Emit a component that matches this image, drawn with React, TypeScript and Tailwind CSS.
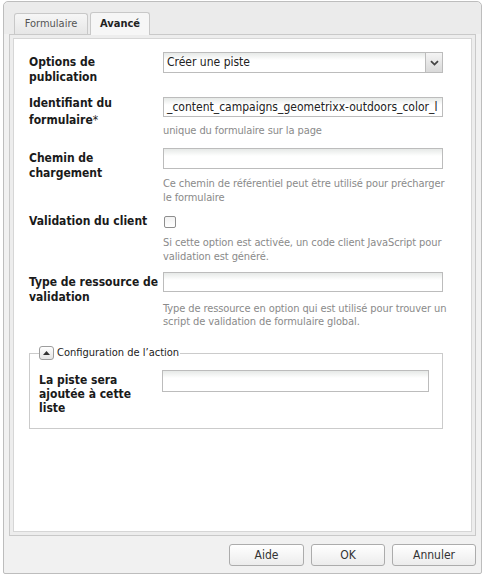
const font = "font-['DejaVu_Sans_Condensed','DejaVu_Sans',sans-serif]";

const inputBase =
  "border border-[#bcbcbc] bg-[linear-gradient(to_bottom,#e6e9e7,#ffffff_7px)] px-[3px] text-[12px] text-[#222] overflow-hidden whitespace-nowrap";

const Hint = ({ children, className = "" }: { children: React.ReactNode; className?: string }) => (
  <div className={`text-[11px] tracking-[-0.1px] text-[#8a8a8a] ${className}`}>{children}</div>
);

const Label = ({ children, className = "" }: { children: React.ReactNode; className?: string }) => (
  <div className={`w-[134px] shrink-0 text-[12px] font-bold text-[#1a1a1a] ${className}`}>{children}</div>
);

const Btn = ({ label, w }: { label: string; w: string }) => (
  <button
    type="button"
    className={`${w} h-[22px] rounded-[3px] border border-[#acacac] bg-[linear-gradient(to_bottom,#ffffff,#ececec)] text-[12px] text-[#333]`}
  >
    {label}
  </button>
);

export default function App() {
  return (
    <div className={`w-[489px] h-[577px] bg-white pt-[1px] pl-[3px] ${font}`}>
      <div className="flex h-[573px] w-[479px] flex-col rounded-t-[5px] rounded-b-[2px] border border-[#bdbdbd] bg-[#f1f1f1]">
        {/* tabs */}
        <div className="rounded-t-[5px] bg-[#ebebeb]">
          <div className="ml-[10px] mt-[10px] flex items-end gap-[2px]">
            <div className="flex h-[21px] w-[74px] items-center justify-center rounded-t-[3px] border border-b-0 border-[#c8c8c8] bg-[linear-gradient(to_bottom,#f6f6f6,#e6e6e6)] text-[11px] text-[#555]">
              Formulaire
            </div>
            <div className="relative z-10 -mb-px flex h-[23px] w-[60px] items-center justify-center rounded-t-[3px] border border-b-0 border-[#c8c8c8] bg-[#f6f6f6] text-[11px] font-bold text-[#222]">
              Avancé
            </div>
          </div>
        </div>

        {/* panel */}
        <div className="mx-[5px] h-[502px] border border-[#c9c9c9] bg-[#ededed] p-[3px]">
          <div className="h-full border border-[#d6d6d6] bg-white pl-[15px] pt-[13px]">
            {/* row 1 */}
            <div className="flex items-start">
              <Label className="pt-[3px] leading-[15px]">
                Options de
                <br />
                publication
              </Label>
              <div className="flex h-[21px] w-[280px] border border-[#bcbcbc] bg-[linear-gradient(to_bottom,#e6e9e7,#ffffff_7px)]">
                <div className="flex-1 px-[3px] text-[12px] leading-[19px] text-[#222]">Créer une piste</div>
                <div className="flex w-[17px] items-center justify-center border-l border-[#bcbcbc] bg-[linear-gradient(to_bottom,#f4f4f4,#d9d9d9)]">
                  <svg width="9" height="6" viewBox="0 0 9 6">
                    <path d="M1 1.2 L4.5 4.6 L8 1.2" fill="none" stroke="#444" strokeWidth="1.8" />
                  </svg>
                </div>
              </div>
            </div>

            {/* row 2 */}
            <div className="mt-[12px] flex items-start">
              <Label className="-mt-[2px] leading-[17px]">
                Identifiant du
                <br />
                formulaire<span className="font-normal">*</span>
              </Label>
              <div>
                <div className={`${inputBase} h-[20px] w-[280px] leading-[18px]`}>
                  _content_campaigns_geometrixx-outdoors_color_l
                </div>
                <Hint className="mt-[7px] leading-[14px]">unique du formulaire sur la page</Hint>
              </div>
            </div>

            {/* row 3 */}
            <div className="mt-[10px] flex items-start">
              <Label className="pt-[3px] leading-[15px]">
                Chemin de
                <br />
                chargement
              </Label>
              <div>
                <div className={`${inputBase} h-[21px] w-[280px]`}></div>
                <Hint className="mt-[8px] leading-[14px]">
                  Ce chemin de référentiel peut être utilisé pour précharger
                  <br />
                  le formulaire
                </Hint>
              </div>
            </div>

            {/* row 4 */}
            <div className="mt-[9px] flex items-start">
              <Label className="leading-[15px]">Validation du client</Label>
              <div>
                <div className="ml-[1px] mt-[2px] h-[12px] w-[12px] rounded-[2px] border border-[#8e8e8e] bg-[linear-gradient(to_bottom,#f2f2f2,#ffffff)]"></div>
                <Hint className="mt-[8px] leading-[14px]">
                  Si cette option est activée, un code client JavaScript pour
                  <br />
                  validation est généré.
                </Hint>
              </div>
            </div>

            {/* row 5 */}
            <div className="mt-[8px] flex items-start">
              <Label className="pt-[3px] leading-[15px]">
                Type de ressource de
                <br />
                validation
              </Label>
              <div>
                <div className={`${inputBase} h-[20px] w-[280px]`}></div>
                <Hint className="mt-[10px] leading-[13px]">
                  Type de ressource en option qui est utilisé pour trouver un
                  <br />
                  script de validation de formulaire global.
                </Hint>
              </div>
            </div>

            {/* fieldset */}
            <fieldset className="mt-[18px] w-[414px] border border-[#cbcbcb] pb-[13px] pl-[9px] pr-[13px]">
              <legend className="flex items-center gap-[3px] pr-[1px]">
                <span className="flex h-[14px] w-[15px] items-center justify-center rounded-[3px] border border-[#9d9d9d] bg-[linear-gradient(to_bottom,#ffffff,#e4e4e4)]">
                  <svg width="7" height="4" viewBox="0 0 7 4">
                    <path d="M0 4 L3.5 0 L7 4 Z" fill="#333" />
                  </svg>
                </span>
                <span className="text-[11px] leading-[14px] text-[#222]">Configuration de l’action</span>
              </legend>
              <div className="mt-[10px] flex items-start">
                <div className="w-[123px] shrink-0 pt-[3px] text-[12px] font-bold leading-[14px] text-[#1a1a1a]">
                  La piste sera
                  <br />
                  ajoutée à cette
                  <br />
                  liste
                </div>
                <div className={`${inputBase} h-[22px] w-[267px]`}></div>
              </div>
            </fieldset>
          </div>
        </div>

        {/* buttons */}
        <div className="mr-[5px] mt-[8px] flex justify-end gap-[7px]">
          <Btn label="Aide" w="w-[75px]" />
          <Btn label="OK" w="w-[74px]" />
          <Btn label="Annuler" w="w-[84px]" />
        </div>
      </div>
    </div>
  );
}
